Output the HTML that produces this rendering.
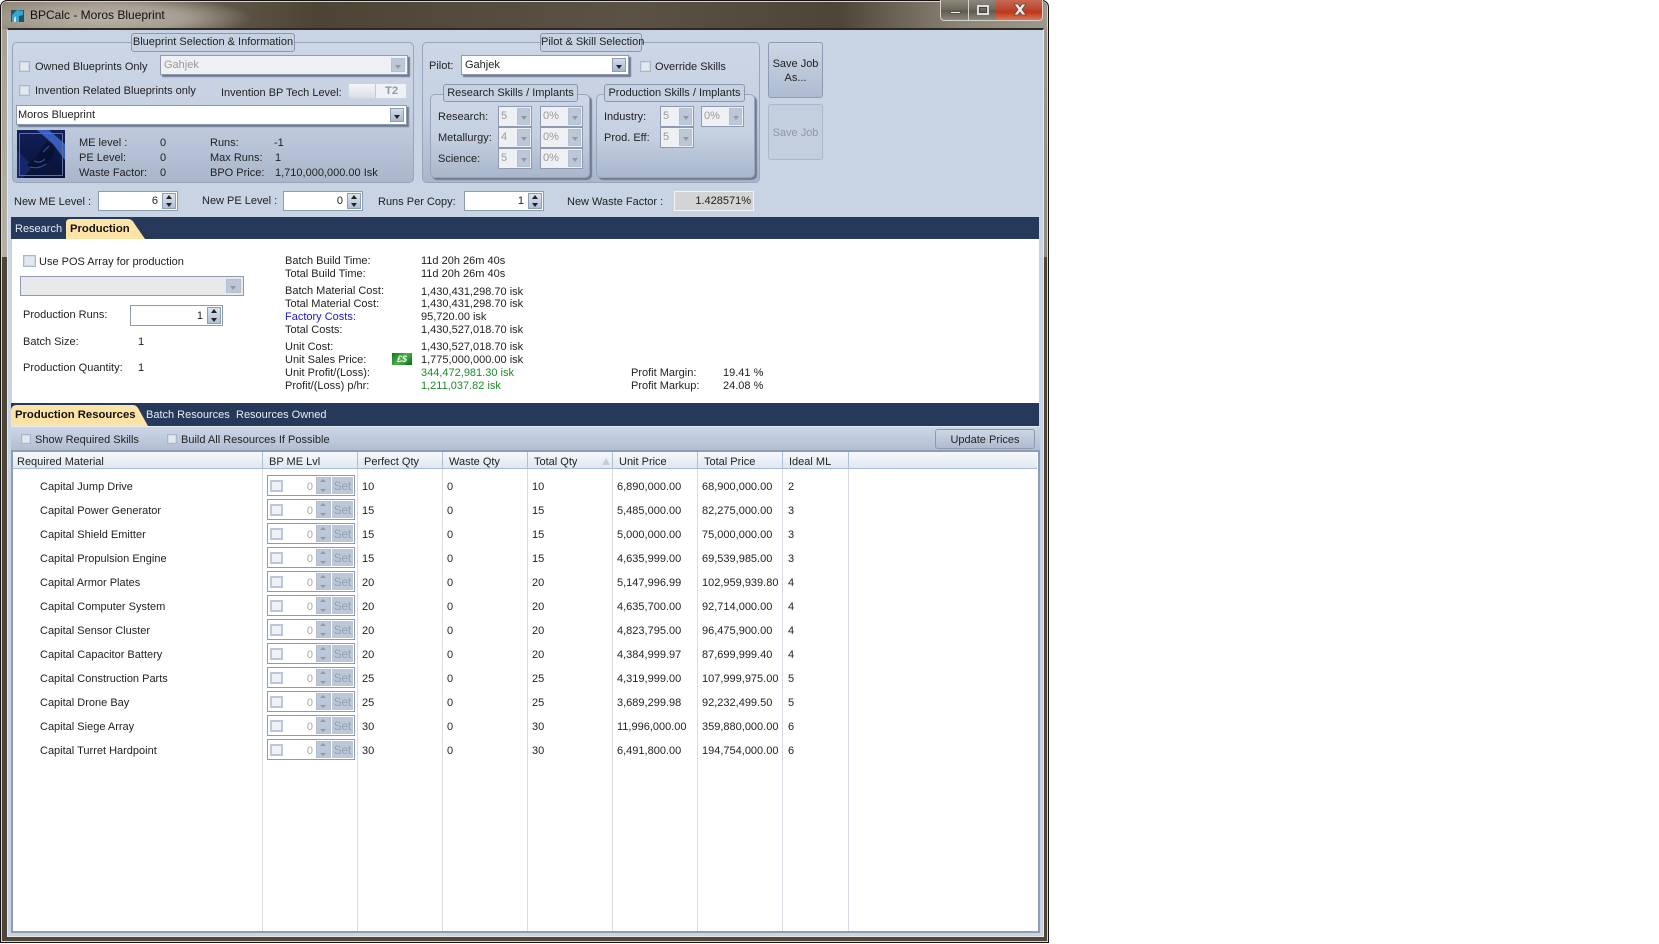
<!DOCTYPE html>
<html><head><meta charset="utf-8"><title>BPCalc - Moros Blueprint</title>
<style>
html,body{margin:0;padding:0;background:#fff;width:1659px;height:944px;overflow:hidden}
*{box-sizing:border-box}
body{font:11px "Liberation Sans",sans-serif;color:#222}
div,span{position:absolute}
.t{line-height:14px;white-space:nowrap;margin-top:1px}
.g{color:#1b8a2c}.d{color:#9a9a9a}
#win{left:0;top:0;width:1049px;height:943px;background:#4f4538;border:1px solid #151210;border-radius:7px 7px 0 0;box-shadow:inset 0 0 0 1px #d8d4ca;overflow:hidden}
#tb{left:1px;top:1px;width:1045px;height:28px;border-radius:6px 6px 0 0;background:radial-gradient(ellipse 150px 24px at 100px 16px,#b9b3a6 0,#a59e90 55%,rgba(120,110,95,0) 100%),linear-gradient(90deg,#8a8374 0,#4e4436 30%,#5b5245 60%,#4d4538 80%,#8c8678 92%,#9e998c 100%)}
#lu{left:1px;top:28px;width:6px;height:228px;background:linear-gradient(#a5a196,#b4b0a4)}
#ru{left:1042px;top:28px;width:5px;height:228px;background:linear-gradient(#9b978b,#8e8a7e)}
#cl{left:6px;top:27px;width:1037px;height:909px;background:#c8d3e3;border:1px solid #e9e9e6;border-top:2px solid #2e2a24;outline:0}
.gp{border:1px solid #97a5bd;border-radius:5px;background:linear-gradient(#ccd6e6 0,#c5d0e1 50%,#a9b6cb 100%)}
.sh{box-shadow:2px 2px 1px #6d7a90}
.lg{border:1px solid #8997b0;border-radius:3px;background:#c6d1e2;text-align:center;line-height:17px;white-space:nowrap}
.ck{width:11px;height:11px;border:1px solid #a9b7cc;background:#e3e8ef;box-shadow:inset 0 0 0 1px #d0d9e6}
.cb{background:#fff;border:1px solid #8d9ab0;line-height:19px;padding-left:3px;white-space:nowrap}
.cb.off{background:#eef0f3;color:#9a9a9a}
.ar{top:2px;right:2px;bottom:2px;width:14px;background:linear-gradient(#d3dcea,#a9b7ce);border:1px solid #8f9db5}
.ar:after{content:"";position:absolute;left:3px;top:6px;border:3px solid transparent;border-top:4px solid #222}
.off .ar{background:#bcc7d8;border-color:#b5c0d1}
.off .ar:after{border-top-color:#8e99aa}
.sm{background:#eef0f3;border:1px solid #8d9ab0;color:#9a9a9a;line-height:19px;padding-left:2px}
.sm .ar{width:13px;top:1px;bottom:1px;right:1px;background:#bcc7d8;border-color:#b5c0d1}
.sm .ar:after{left:3px;top:7px;border-top-color:#8e99aa}
.in{background:#fff;border:1px solid #8d9ab0;line-height:18px;text-align:right;white-space:nowrap}
.sp{top:1px;right:1px;bottom:1px;width:14px;background:linear-gradient(#dbe3ef,#b2bfd3);border:1px solid #8f9db5}
.sp:before{content:"";position:absolute;left:3px;top:1px;border:3px solid transparent;border-top:0;border-bottom:4px solid #222}
.sp:after{content:"";position:absolute;left:3px;bottom:1px;border:3px solid transparent;border-bottom:0;border-top:4px solid #222}
.bt{border:1px solid #8d9ab3;border-radius:3px;background:linear-gradient(#ccd6e5,#aebbd0);text-align:center;white-space:nowrap}
.bar{background:#26395a}
.w{color:#e8edf5}
.b{font-weight:bold;color:#111;font-size:11.3px}
.dv{width:1px;background:#d9dde3;top:452px;height:479px}
.dh{width:1px;background:#aebfd8;top:452px;height:17px}
.r{left:0;width:1040px;height:24px}
.r>span{line-height:24px;white-space:nowrap;top:0;margin-top:1px}
.n{left:40px}.q{left:362px}.wq{left:447px}.tq{left:532px}.up{left:617px}.tp{left:702px}.il{left:788px}
.r>.bc{left:267px;top:1px;margin-top:0;width:88px;height:21px;border:1px solid #8d9ab0;background:#fff}
.bc .ck{left:2px;top:4px;width:13px;height:12px;background:#eef1f5;box-shadow:none;border:2px solid #bcc8da}
.bc .z{right:41px;top:1px;color:#a8a8a8;line-height:20px}
.bc .s{left:48px;top:1px;width:15px;height:17px;background:#bcc7d8;border:1px solid #b3bed0}
.bc .s:before{content:"";position:absolute;left:3px;top:1px;border:3px solid transparent;border-top:0;border-bottom:3px solid #8f9aab}
.bc .s:after{content:"";position:absolute;left:3px;bottom:1px;border:3px solid transparent;border-bottom:0;border-top:3px solid #8f9aab}
.bc .e{left:64px;top:1px;width:21px;height:17px;background:#bcc7d8;color:#95a0b0;text-align:center;line-height:20px;font-size:11.5px;overflow:hidden}
</style></head><body>
<div id="win"></div>
<div id="tb" style="left:2px;top:2px"></div>
<div id="lu" style="left:2px;top:29px;width:5px"></div>
<div id="ru" style="left:1043px;top:29px;width:4px"></div>

<svg style="position:absolute;left:10px;top:7px" width="15" height="16" viewBox="0 0 15 16"><rect x="1" y="3" width="13" height="12" fill="#1b5572"/><path d="M2 15V8l5-5 6 1v4l-4 1v6z" fill="#3aa5cd"/><path d="M4 15v-4l2-2v6z" fill="#c5e8f2"/></svg>
<div class="t" style="left:30px;top:7px;color:#111;font-size:12px">BPCalc - Moros Blueprint</div>

<!-- window buttons -->
<div style="left:940px;top:0;width:103px;height:21px;border:1px solid #d5d2c9;border-top:0;border-radius:0 0 4px 4px;overflow:hidden;background:linear-gradient(#8d887c,#6c675c 50%,#5d584e 52%,#8b877c)">
 <div style="left:27px;top:0;width:1px;height:20px;background:#d5d2c9"></div>
 <div style="left:55px;top:0;width:47px;height:20px;background:linear-gradient(#c96a55,#b8442c 50%,#c23517 60%,#d8765a)"></div>
 <div style="left:9px;top:11px;width:11px;height:3px;background:#eee;border:1px solid #555"></div>
 <div style="left:36px;top:5px;width:12px;height:10px;border:2px solid #dcdcdc;box-shadow:0 0 0 1px #444 inset"></div>
 <svg style="position:absolute;left:71px;top:3px" width="16" height="13" viewBox="0 0 16 13"><path d="M2 1h4l2 3 2-3h4l-4 5.500 4 5.500h-4l-2-3-2 3h-4l4-5.500z" fill="#eee" stroke="#6d3a30" stroke-width=".7"/></svg>
</div>

<div id="cl" style="left:7px;top:28px;width:1037px;height:909px"></div>

<!-- group 1 -->
<div class="gp" style="left:12px;top:42px;width:402px;height:141px"></div>
<div class="lg" style="left:131px;top:33px;width:164px;height:19px">Blueprint Selection &amp; Information</div>
<div class="ck" style="left:19px;top:61px"></div>
<div class="t" style="left:35px;top:59px">Owned Blueprints Only</div>
<div class="cb off sh" style="left:160px;top:55px;width:248px;height:20px">Gahjek<span class="ar"></span></div>
<div class="ck" style="left:19px;top:85px"></div>
<div class="t" style="left:35px;top:83px">Invention Related Blueprints only</div>
<div class="t" style="left:221px;top:85px">Invention BP Tech Level:</div>
<div style="left:348px;top:83px;width:59px;height:16px;background:#eef1f5;border:1px solid #ccd4e0;border-radius:2px"></div>
<div style="left:349px;top:84px;width:27px;height:14px;background:linear-gradient(#f3f5f8,#d9dee6);border-right:1px solid #c2cad6"></div>
<div class="t b" style="left:385px;top:83px;color:#8f99a8">T2</div>
<div class="cb sh" style="left:16px;top:105px;width:391px;height:20px;padding-left:1px">Moros Blueprint<span class="ar"></span></div>
<svg style="position:absolute;left:17px;top:130px" width="48" height="48" viewBox="0 0 48 48"><defs><linearGradient id="m" x1="0" y1="0" x2="0" y2="1"><stop offset="0" stop-color="#121f58"/><stop offset="1" stop-color="#0a1238"/></linearGradient></defs><rect width="48" height="48" fill="url(#m)"/><path d="M20 0H32L48 14V30L36 14z" fill="#3f68d2" opacity=".85"/><path d="M0 20L16 36 6 48H0z" fill="#1a2f7a" opacity=".7"/><path d="M30 11l8 6-2 10-8 9-12 4-6-5 9-8z" fill="#0a1030" opacity=".92"/><path d="M13 37c6 2 12 0 16-3M17 31c4 2 8 1 11-2M26 22l6-6" stroke="#3557a8" fill="none"/><rect x="2.500" y="3.500" width="43" height="42" fill="none" stroke="#5e6f9e"/></svg>
<div class="t" style="left:79px;top:135px">ME level :</div><div class="t" style="left:160px;top:135px">0</div>
<div class="t" style="left:79px;top:150px">PE Level:</div><div class="t" style="left:160px;top:150px">0</div>
<div class="t" style="left:79px;top:165px">Waste Factor:</div><div class="t" style="left:160px;top:165px">0</div>
<div class="t" style="left:210px;top:135px">Runs:</div><div class="t" style="left:274px;top:135px">-1</div>
<div class="t" style="left:210px;top:150px">Max Runs:</div><div class="t" style="left:275px;top:150px">1</div>
<div class="t" style="left:210px;top:165px">BPO Price:</div><div class="t" style="left:275px;top:165px">1,710,000,000.00 Isk</div>

<!-- group 2 -->
<div class="gp" style="left:422px;top:42px;width:338px;height:141px"></div>
<div class="lg" style="left:540px;top:33px;width:102px;height:19px">Pilot &amp; Skill Selection</div>
<div class="t" style="left:429px;top:58px">Pilot:</div>
<div class="cb sh" style="left:461px;top:55px;width:168px;height:20px">Gahjek<span class="ar"></span></div>
<div class="ck" style="left:640px;top:61px"></div>
<div class="t" style="left:655px;top:59px">Override Skills</div>

<div class="gp sh" style="left:430px;top:94px;width:160px;height:84px"></div>
<div class="lg" style="left:443px;top:84px;width:135px;height:18px;line-height:16px">Research Skills / Implants</div>
<div class="gp sh" style="left:596px;top:94px;width:159px;height:84px"></div>
<div class="lg" style="left:604px;top:84px;width:141px;height:18px;line-height:16px">Production Skills / Implants</div>

<div class="t" style="left:438px;top:109px">Research:</div>
<div class="t" style="left:438px;top:130px">Metallurgy:</div>
<div class="t" style="left:438px;top:151px">Science:</div>
<div class="sm" style="left:498px;top:106px;width:34px;height:21px">5<span class="ar"></span></div>
<div class="sm" style="left:498px;top:127px;width:34px;height:21px">4<span class="ar"></span></div>
<div class="sm" style="left:498px;top:148px;width:34px;height:21px">5<span class="ar"></span></div>
<div class="sm" style="left:540px;top:106px;width:43px;height:21px">0%<span class="ar"></span></div>
<div class="sm" style="left:540px;top:127px;width:43px;height:21px">0%<span class="ar"></span></div>
<div class="sm" style="left:540px;top:148px;width:43px;height:21px">0%<span class="ar"></span></div>
<div class="t" style="left:604px;top:109px">Industry:</div>
<div class="t" style="left:604px;top:130px">Prod. Eff:</div>
<div class="sm" style="left:660px;top:106px;width:34px;height:21px">5<span class="ar"></span></div>
<div class="sm" style="left:660px;top:127px;width:34px;height:21px">5<span class="ar"></span></div>
<div class="sm" style="left:701px;top:106px;width:43px;height:21px">0%<span class="ar"></span></div>

<div class="bt" style="left:768px;top:42px;width:55px;height:56px;padding-top:14px;line-height:14px">Save Job<br>As...</div>
<div class="bt" style="left:768px;top:104px;width:55px;height:56px;line-height:56px;color:#8f98a6;background:#c3cedf;border-color:#aab6ca">Save Job</div>

<!-- spin row -->
<div class="t" style="left:14px;top:194px">New ME Level :</div>
<div class="in" style="left:98px;top:191px;width:80px;height:20px;padding-right:19px">6<span class="sp"></span></div>
<div class="t" style="left:202px;top:193px">New PE Level :</div>
<div class="in" style="left:283px;top:191px;width:80px;height:20px;padding-right:19px">0<span class="sp"></span></div>
<div class="t" style="left:378px;top:194px">Runs Per Copy:</div>
<div class="in" style="left:464px;top:191px;width:80px;height:20px;padding-right:19px">1<span class="sp"></span></div>
<div class="t" style="left:567px;top:194px">New Waste Factor :</div>
<div class="in" style="left:674px;top:191px;width:80px;height:20px;background:#d4d4d4;border-color:#f2f4f7;padding-right:2px">1.428571%</div>

<!-- tabs 1 -->
<div class="bar" style="left:11px;top:217px;width:1028px;height:22px"></div>
<div class="t w" style="left:15px;top:221px">Research</div>
<svg style="position:absolute;left:66px;top:219px" width="80" height="20" viewBox="0 0 80 20"><path d="M0 20V4Q0 0 4 0H62Q66 0 68 4L79 20z" fill="#fde3a6"/></svg>
<div class="t b" style="left:70px;top:221px">Production</div>

<!-- production panel -->
<div style="left:12px;top:239px;width:1027px;height:164px;background:#fff"></div>
<div class="ck" style="left:23px;top:255px;width:13px;height:12px"></div>
<div class="t" style="left:39px;top:254px">Use POS Array for production</div>
<div class="cb off" style="left:20px;top:276px;width:224px;height:20px;background:#e8e9eb"><span class="ar" style="width:15px"></span></div>
<div class="t" style="left:23px;top:307px">Production Runs:</div>
<div class="in" style="left:130px;top:305px;width:93px;height:21px;padding-right:19px;padding-top:1px">1<span class="sp"></span></div>
<div class="t" style="left:23px;top:334px">Batch Size:</div><div class="t" style="left:138px;top:334px">1</div>
<div class="t" style="left:23px;top:360px">Production Quantity:</div><div class="t" style="left:138px;top:360px">1</div>

<div class="t" style="left:285px;top:253px">Batch Build Time:</div><div class="t" style="left:421px;top:253px">11d 20h 26m 40s</div>
<div class="t" style="left:285px;top:266px">Total Build Time:</div><div class="t" style="left:421px;top:266px">11d 20h 26m 40s</div>
<div class="t" style="left:285px;top:283px">Batch Material Cost:</div><div class="t" style="left:421px;top:284px">1,430,431,298.70 isk</div>
<div class="t" style="left:285px;top:296px">Total Material Cost:</div><div class="t" style="left:421px;top:296px">1,430,431,298.70 isk</div>
<div class="t" style="left:285px;top:309px;color:#1a1acb">Factory Costs:</div><div class="t" style="left:421px;top:309px">95,720.00 isk</div>
<div class="t" style="left:285px;top:322px">Total Costs:</div><div class="t" style="left:421px;top:322px">1,430,527,018.70 isk</div>
<div class="t" style="left:285px;top:339px">Unit Cost:</div><div class="t" style="left:421px;top:339px">1,430,527,018.70 isk</div>
<div class="t" style="left:285px;top:352px">Unit Sales Price:</div><div class="t" style="left:421px;top:352px">1,775,000,000.00 isk</div>
<div class="t" style="left:285px;top:365px">Unit Profit/(Loss):</div><div class="t g" style="left:421px;top:365px">344,472,981.30 isk</div>
<div class="t" style="left:285px;top:378px">Profit/(Loss) p/hr:</div><div class="t g" style="left:421px;top:378px">1,211,037.82 isk</div>
<div style="left:392px;top:353px;width:20px;height:12px;background:linear-gradient(135deg,#0d7a14,#4fb04f 50%,#0b6a12);color:#eaf5ea;font:italic bold 9px/12px 'Liberation Sans',sans-serif;text-align:center">£$</div>
<div class="t" style="left:631px;top:365px">Profit Margin:</div><div class="t" style="left:723px;top:365px">19.41 %</div>
<div class="t" style="left:631px;top:378px">Profit Markup:</div><div class="t" style="left:723px;top:378px">24.08 %</div>

<!-- tabs 2 -->
<div class="bar" style="left:11px;top:403px;width:1028px;height:23px"></div>
<svg style="position:absolute;left:11px;top:405px" width="138" height="21" viewBox="0 0 138 21"><path d="M0 21V6Q0 0 6 0H122Q125 0 127 3L137 21z" fill="#fde3a6"/></svg>
<div class="t b" style="left:15px;top:407px">Production Resources</div>
<div class="t w" style="left:146px;top:407px">Batch Resources</div>
<div class="t w" style="left:236px;top:407px">Resources Owned</div>

<!-- toolbar -->
<div style="left:11px;top:426px;width:1029px;height:25px;background:linear-gradient(#ccd6e6,#b0bdd2);border-top:1px solid #e6ebf2"></div>
<div class="ck" style="left:21px;top:434px;width:10px;height:10px"></div>
<div class="t" style="left:35px;top:432px">Show Required Skills</div>
<div class="ck" style="left:167px;top:434px;width:10px;height:10px"></div>
<div class="t" style="left:181px;top:432px">Build All Resources If Possible</div>
<div class="bt" style="left:935px;top:429px;width:100px;height:20px;line-height:20px">Update Prices</div>

<!-- table -->
<div style="left:11px;top:450px;width:1029px;height:483px;border:2px solid #8f9db3;background:#fff"></div>
<div style="left:13px;top:452px;width:1024px;height:17px;background:linear-gradient(#f6f9fc,#dfe7f2);border-bottom:1px solid #a7bcd8"></div>
<div class="dh" style="left:262px"></div><div class="dh" style="left:357px"></div><div class="dh" style="left:442px"></div><div class="dh" style="left:527px"></div><div class="dh" style="left:612px"></div><div class="dh" style="left:697px"></div><div class="dh" style="left:782px"></div><div class="dh" style="left:848px"></div>
<div class="dv" style="left:262px;top:469px;height:462px"></div><div class="dv" style="left:357px;top:469px;height:462px"></div><div class="dv" style="left:442px;top:469px;height:462px"></div><div class="dv" style="left:527px;top:469px;height:462px"></div><div class="dv" style="left:612px;top:469px;height:462px"></div><div class="dv" style="left:697px;top:469px;height:462px"></div><div class="dv" style="left:782px;top:469px;height:462px"></div><div class="dv" style="left:848px;top:469px;height:462px"></div>
<div class="t" style="left:17px;top:454px">Required Material</div>
<div class="t" style="left:269px;top:454px">BP ME Lvl</div>
<div class="t" style="left:364px;top:454px">Perfect Qty</div>
<div class="t" style="left:449px;top:454px">Waste Qty</div>
<div class="t" style="left:534px;top:454px">Total Qty</div>
<div style="left:602px;top:458px;border:4px solid transparent;border-top:0;border-bottom:7px solid #c9ced6"></div>
<div class="t" style="left:619px;top:454px">Unit Price</div>
<div class="t" style="left:704px;top:454px">Total Price</div>
<div class="t" style="left:789px;top:454px">Ideal ML</div>

<div class="r" style="top:474px"><span class="n">Capital Jump Drive</span><span class="bc"><span class="ck"></span><span class="z">0</span><span class="s"></span><span class="e">Set</span></span><span class="q">10</span><span class="wq">0</span><span class="tq">10</span><span class="up">6,890,000.00</span><span class="tp">68,900,000.00</span><span class="il">2</span></div>
<div class="r" style="top:498px"><span class="n">Capital Power Generator</span><span class="bc"><span class="ck"></span><span class="z">0</span><span class="s"></span><span class="e">Set</span></span><span class="q">15</span><span class="wq">0</span><span class="tq">15</span><span class="up">5,485,000.00</span><span class="tp">82,275,000.00</span><span class="il">3</span></div>
<div class="r" style="top:522px"><span class="n">Capital Shield Emitter</span><span class="bc"><span class="ck"></span><span class="z">0</span><span class="s"></span><span class="e">Set</span></span><span class="q">15</span><span class="wq">0</span><span class="tq">15</span><span class="up">5,000,000.00</span><span class="tp">75,000,000.00</span><span class="il">3</span></div>
<div class="r" style="top:546px"><span class="n">Capital Propulsion Engine</span><span class="bc"><span class="ck"></span><span class="z">0</span><span class="s"></span><span class="e">Set</span></span><span class="q">15</span><span class="wq">0</span><span class="tq">15</span><span class="up">4,635,999.00</span><span class="tp">69,539,985.00</span><span class="il">3</span></div>
<div class="r" style="top:570px"><span class="n">Capital Armor Plates</span><span class="bc"><span class="ck"></span><span class="z">0</span><span class="s"></span><span class="e">Set</span></span><span class="q">20</span><span class="wq">0</span><span class="tq">20</span><span class="up">5,147,996.99</span><span class="tp">102,959,939.80</span><span class="il">4</span></div>
<div class="r" style="top:594px"><span class="n">Capital Computer System</span><span class="bc"><span class="ck"></span><span class="z">0</span><span class="s"></span><span class="e">Set</span></span><span class="q">20</span><span class="wq">0</span><span class="tq">20</span><span class="up">4,635,700.00</span><span class="tp">92,714,000.00</span><span class="il">4</span></div>
<div class="r" style="top:618px"><span class="n">Capital Sensor Cluster</span><span class="bc"><span class="ck"></span><span class="z">0</span><span class="s"></span><span class="e">Set</span></span><span class="q">20</span><span class="wq">0</span><span class="tq">20</span><span class="up">4,823,795.00</span><span class="tp">96,475,900.00</span><span class="il">4</span></div>
<div class="r" style="top:642px"><span class="n">Capital Capacitor Battery</span><span class="bc"><span class="ck"></span><span class="z">0</span><span class="s"></span><span class="e">Set</span></span><span class="q">20</span><span class="wq">0</span><span class="tq">20</span><span class="up">4,384,999.97</span><span class="tp">87,699,999.40</span><span class="il">4</span></div>
<div class="r" style="top:666px"><span class="n">Capital Construction Parts</span><span class="bc"><span class="ck"></span><span class="z">0</span><span class="s"></span><span class="e">Set</span></span><span class="q">25</span><span class="wq">0</span><span class="tq">25</span><span class="up">4,319,999.00</span><span class="tp">107,999,975.00</span><span class="il">5</span></div>
<div class="r" style="top:690px"><span class="n">Capital Drone Bay</span><span class="bc"><span class="ck"></span><span class="z">0</span><span class="s"></span><span class="e">Set</span></span><span class="q">25</span><span class="wq">0</span><span class="tq">25</span><span class="up">3,689,299.98</span><span class="tp">92,232,499.50</span><span class="il">5</span></div>
<div class="r" style="top:714px"><span class="n">Capital Siege Array</span><span class="bc"><span class="ck"></span><span class="z">0</span><span class="s"></span><span class="e">Set</span></span><span class="q">30</span><span class="wq">0</span><span class="tq">30</span><span class="up">11,996,000.00</span><span class="tp">359,880,000.00</span><span class="il">6</span></div>
<div class="r" style="top:738px"><span class="n">Capital Turret Hardpoint</span><span class="bc"><span class="ck"></span><span class="z">0</span><span class="s"></span><span class="e">Set</span></span><span class="q">30</span><span class="wq">0</span><span class="tq">30</span><span class="up">6,491,800.00</span><span class="tp">194,754,000.00</span><span class="il">6</span></div>
</body></html>
